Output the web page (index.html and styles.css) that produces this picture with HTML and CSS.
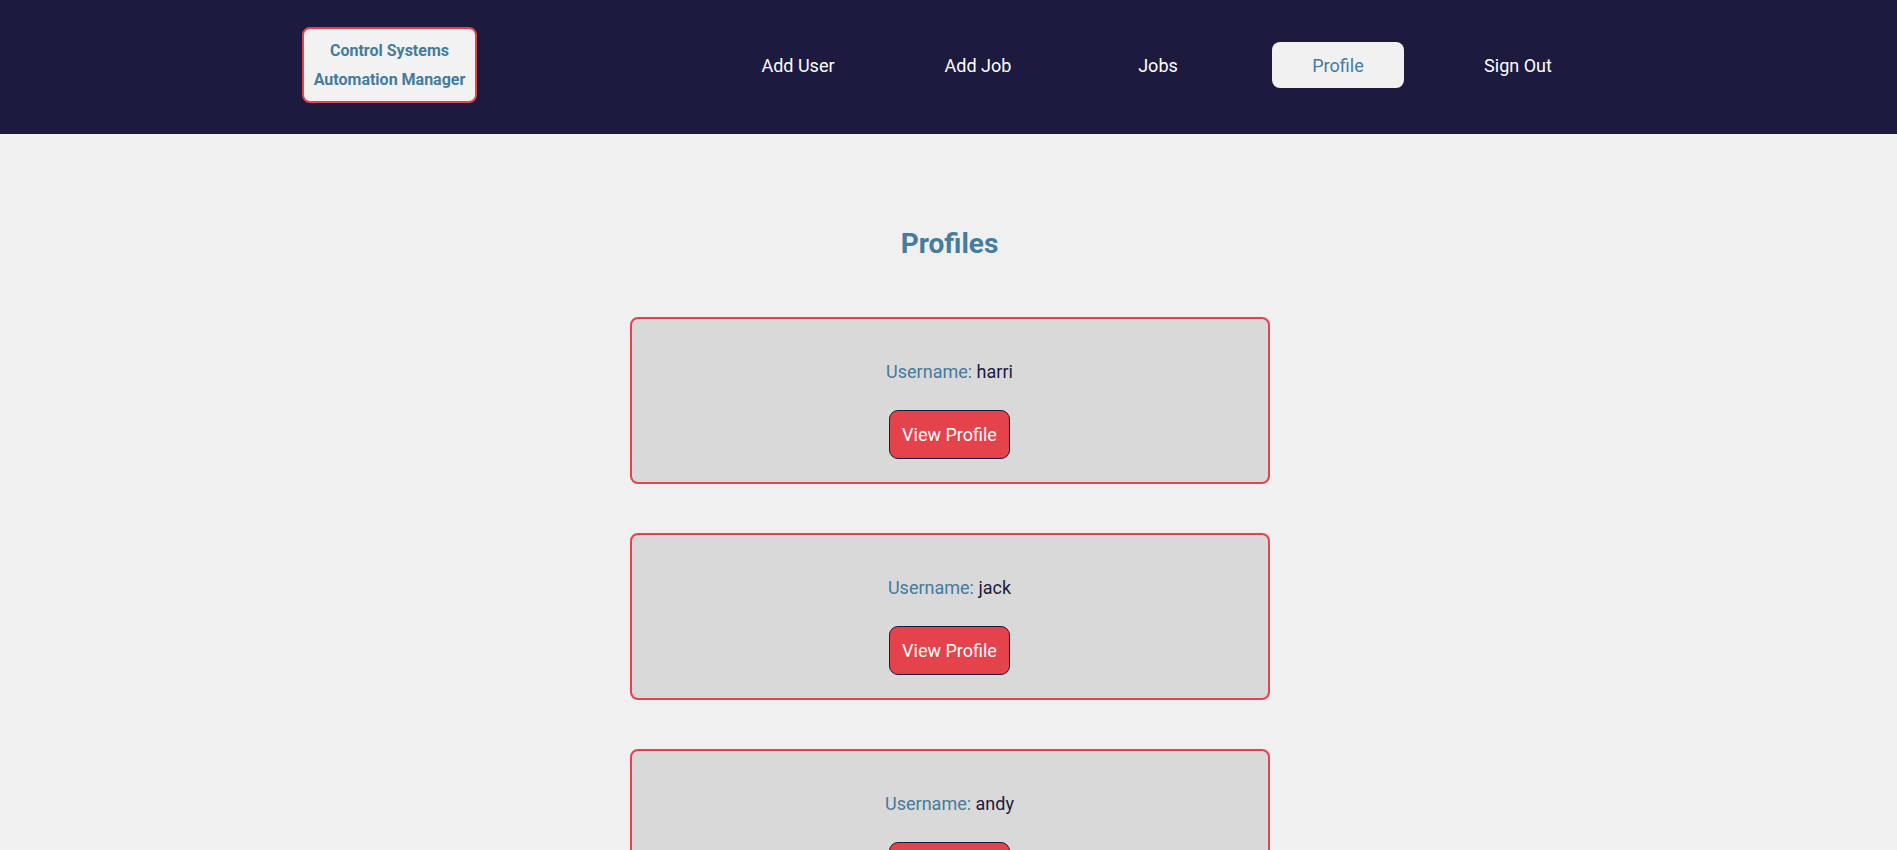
FILE: index.html
```html
<!DOCTYPE html>
<html lang="en">
<head>
<meta charset="utf-8">
<title>Profiles</title>
<link rel="stylesheet" href="styles.css">
</head>
<body>
<header class="site-header">
  <div class="header-inner">
    <a class="logo" href="#">Control Systems<br>Automation Manager</a>
    <nav class="nav">
      <a class="nav-link" href="#">Add User</a>
      <a class="nav-link" href="#">Add Job</a>
      <a class="nav-link" href="#">Jobs</a>
      <a class="nav-link active" href="#">Profile</a>
      <a class="nav-link" href="#">Sign Out</a>
    </nav>
  </div>
</header>
<main class="main">
  <h2 class="title">Profiles</h2>
  <div class="card-list">
    <div class="card">
      <p class="username"><span class="label">Username:</span> harri</p>
      <button class="btn">View Profile</button>
    </div>
    <div class="card">
      <p class="username"><span class="label">Username:</span> jack</p>
      <button class="btn">View Profile</button>
    </div>
    <div class="card">
      <p class="username"><span class="label">Username:</span> andy</p>
      <button class="btn">View Profile</button>
    </div>
  </div>
</main>
</body>
</html>
```

FILE: styles.css
```css
* { box-sizing: border-box; }
html, body { margin: 0; padding: 0; }
body {
  background: #f0f0f0;
  font-family: Roboto, "Liberation Sans", Arial, sans-serif;
  color: #1c1a3f;
}
.site-header {
  background: #1c1a3f;
  height: 134px;
  padding-bottom: 4px;
}
.header-inner {
  width: 1293px;
  height: 100%;
  margin: 0 auto;
  display: flex;
  align-items: center;
  justify-content: space-between;
}
.logo {
  display: block;
  width: 175px;
  height: 76px;
  padding: 7px 0;
  background: #f2f2f2;
  border: 2px solid #e5434b;
  border-radius: 8px;
  text-align: center;
  font-size: 16px;
  font-weight: 700;
  line-height: 29px;
  color: #457b9d;
  text-decoration: none;
}
.nav {
  display: flex;
  gap: 48px;
  margin-right: 11px;
}
.nav-link {
  width: 132px;
  height: 46px;
  display: flex;
  align-items: center;
  justify-content: center;
  border-radius: 8px;
  color: #ffffff;
  font-size: 18px;
  text-decoration: none;
}
.nav-link.active {
  background: #f1f1f1;
  color: #457b9d;
}
.main {
  padding-top: 93px;
  padding-left: 2px;
  display: flex;
  flex-direction: column;
  align-items: center;
}
.title {
  margin: 0;
  font-size: 28px;
  line-height: 33px;
  font-weight: 700;
  color: #457b9d;
}
.card-list {
  margin-top: 57px;
  display: flex;
  flex-direction: column;
  gap: 49px;
}
.card {
  width: 640px;
  height: 167px;
  background: #d9d9d9;
  border: 2px solid #e5434b;
  border-radius: 8px;
  padding: 42px 24px 22px;
  display: flex;
  flex-direction: column;
  align-items: center;
}
.username {
  margin: 0;
  font-size: 18px;
  line-height: 21px;
  color: #1c1a3f;
}
.label { color: #457b9d; }
.btn {
  margin-top: 28px;
  height: 49px;
  padding: 0 12px;
  background: #e5434b;
  color: #ffffff;
  border: 1px solid #1c1a3f;
  border-radius: 9px;
  font-family: Roboto, "Liberation Sans", Arial, sans-serif;
  font-size: 18px;
  cursor: pointer;
}
```
